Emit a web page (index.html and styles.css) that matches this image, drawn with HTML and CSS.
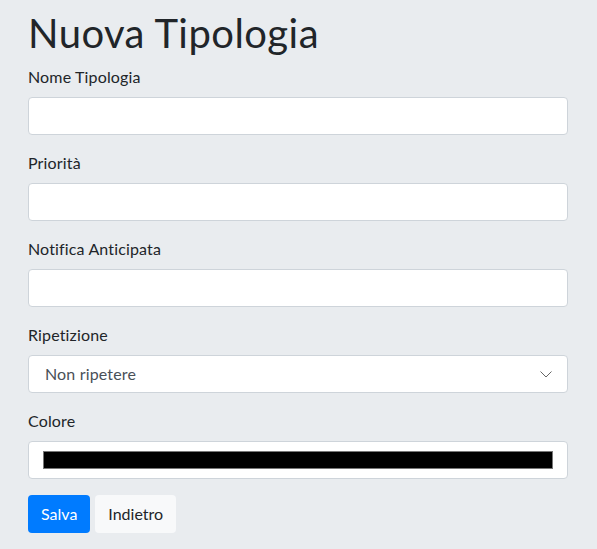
FILE: index.html
```html
<!DOCTYPE html>
<html lang="it">
<head>
<meta charset="utf-8">
<title>Nuova Tipologia</title>
<link rel="stylesheet" href="styles.css">
</head>
<body>
<main class="page">
  <h1 class="title">Nuova Tipologia</h1>
  <form class="form">
    <div class="group">
      <label class="label">Nome Tipologia</label>
      <div class="control"></div>
    </div>
    <div class="group">
      <label class="label">Priorità</label>
      <div class="control"></div>
    </div>
    <div class="group">
      <label class="label">Notifica Anticipata</label>
      <div class="control"></div>
    </div>
    <div class="group">
      <label class="label">Ripetizione</label>
      <div class="control select">
        <span class="select-text">Non ripetere</span>
        <svg class="chevron" width="12" height="7" viewBox="0 0 12 7"><path d="M0.5 0.5l5.5 5.5 5.5-5.5" fill="none" stroke="#666" stroke-width="1"/></svg>
      </div>
    </div>
    <div class="group">
      <label class="label">Colore</label>
      <div class="control color"><span class="swatch"></span></div>
    </div>
    <div class="actions">
      <button type="button" class="btn btn-primary">Salva</button>
      <button type="button" class="btn btn-light">Indietro</button>
    </div>
  </form>
</main>
</body>
</html>
```
FILE: styles.css
```css
html, body {
  margin: 0;
  padding: 0;
  background: #e9ecef;
}
body {
  font-family: "Segoe UI", Lato, "Noto Sans", sans-serif;
  font-size: 16px;
  line-height: 1.5;
  color: #212529;
}
.page {
  padding: 9px 29px 0 28px;
}
.title {
  margin: 0 0 8px;
  font-size: 40px;
  font-weight: 400;
  line-height: 48px;
  letter-spacing: 0.45px;
}
.form {
  display: flex;
  flex-direction: column;
}
.group {
  display: flex;
  flex-direction: column;
  margin-bottom: 16px;
}
.label {
  display: block;
  margin-bottom: 8px;
  line-height: 24px;
  letter-spacing: 0.15px;
}
.control {
  box-sizing: border-box;
  height: 38px;
  background: #fff;
  border: 1px solid #ced4da;
  border-radius: 4px;
}
.select {
  display: flex;
  align-items: center;
  justify-content: space-between;
  padding: 0 15px 0 16px;
  color: #495057;
}
.select-text {
  letter-spacing: 0.15px;
}
.color {
  display: flex;
  align-items: center;
  padding: 0 14px 0 14px;
}
.swatch {
  flex: 1;
  height: 16px;
  background: #000;
  border: 1px solid #777;
}
.actions {
  display: flex;
  gap: 5px;
}
.btn {
  height: 38px;
  padding: 0 12px;
  border: 1px solid transparent;
  border-radius: 4px;
  font: inherit;
  line-height: 24px;
  cursor: pointer;
}
.btn-primary {
  background: #007bff;
  color: #fff;
}
.btn-light {
  background: #f8f9fa;
  color: #212529;
}
```
